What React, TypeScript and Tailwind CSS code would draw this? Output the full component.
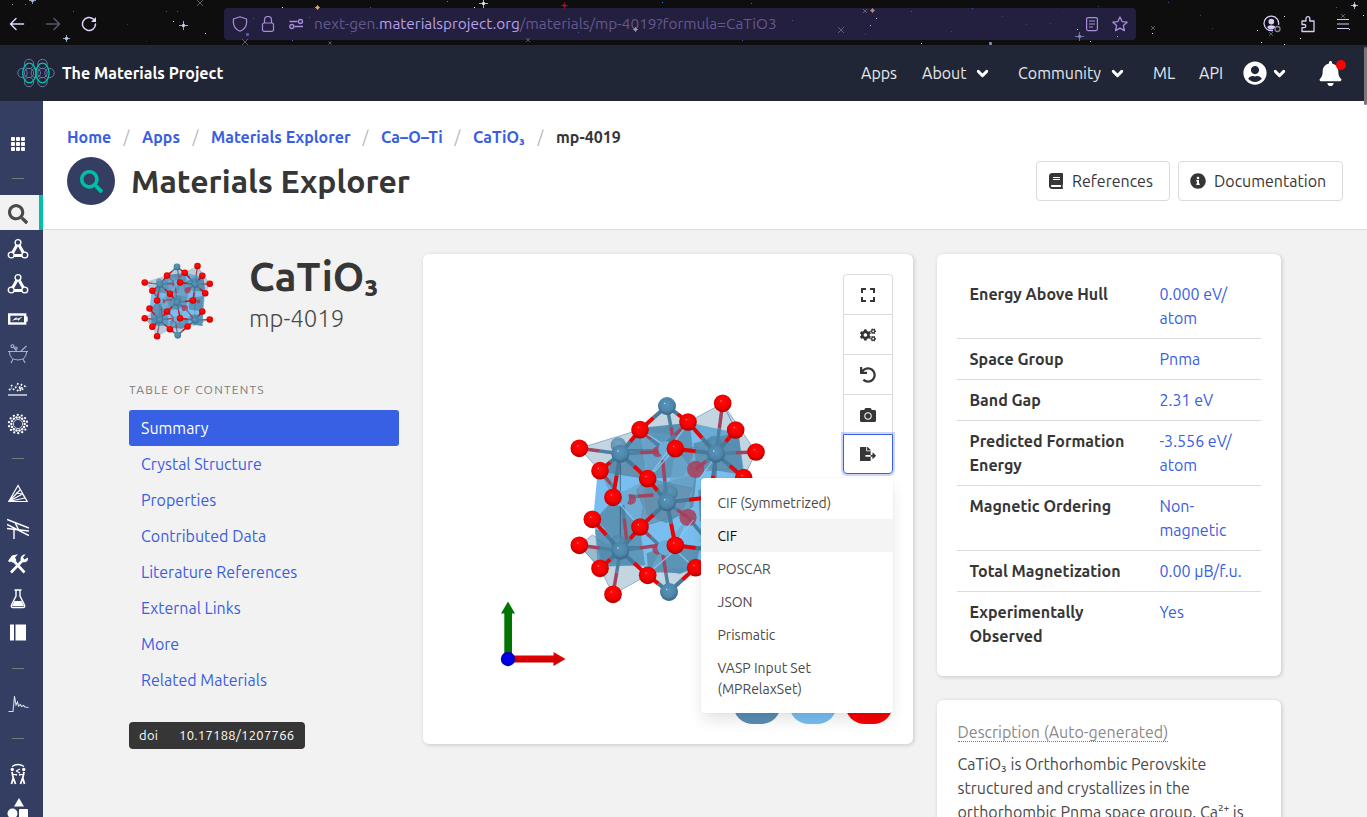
import React from "react";
import {
  FaBook,
  FaInfoCircle,
  FaCogs,
  FaUndo,
  FaCamera,
  FaFileExport,
  FaSearch,
  FaBell,
  FaUserCircle,
} from "react-icons/fa";
import { MdFullscreen } from "react-icons/md";
import { LuChevronDown } from "react-icons/lu";

type P = [number, number];

/* ---------- crystal structure ---------- */

const calcium: P[] = [
  [561, 78],
  [421, 221],
  [708, 221],
  [561, 367],
  [421, 512],
  [708, 512],
  [567, 636],
];

const oxygen: P[] = [
  [728, 70], [624, 126], [480, 149], [298, 205], [767, 150], [828, 216],
  [586, 206], [360, 272], [503, 296], [791, 293], [399, 352], [692, 352],
  [337, 418], [480, 441], [767, 441], [298, 496], [586, 496], [828, 506],
  [360, 565], [503, 586], [647, 563], [399, 643],
];

const backOxygen: P[] = [[647, 268], [624, 412], [533, 215], [452, 358], [533, 508], [735, 360]];

const bonds: [P, P][] = [
  [[561, 78], [480, 149]], [[561, 78], [624, 126]],
  [[421, 221], [480, 149]], [[421, 221], [360, 272]], [[421, 221], [399, 352]], [[421, 221], [503, 296]],
  [[708, 221], [624, 126]], [[708, 221], [767, 150]], [[708, 221], [586, 206]], [[708, 221], [791, 293]], [[708, 221], [692, 352]],
  [[561, 367], [503, 296]], [[561, 367], [480, 441]], [[561, 367], [586, 496]], [[561, 367], [692, 352]],
  [[421, 512], [337, 418]], [[421, 512], [480, 441]], [[421, 512], [360, 565]], [[421, 512], [503, 586]],
  [[708, 512], [767, 441]], [[708, 512], [647, 563]], [[708, 512], [586, 496]],
  [[567, 636], [503, 586]], [[567, 636], [647, 563]],
];

const backBonds: [P, P][] = [
  [[421, 221], [298, 205]], [[708, 221], [828, 216]], [[708, 221], [728, 70]],
  [[421, 512], [298, 496]], [[421, 512], [399, 643]], [[708, 512], [828, 506]],
  [[561, 78], [585, 206]], [[567, 636], [548, 520]], [[561, 367], [624, 412]],
  [[545, 205], [480, 149]], [[545, 205], [624, 126]], [[425, 352], [360, 272]],
  [[425, 352], [520, 345]], [[545, 503], [480, 441]], [[708, 221], [647, 268]],
  [[561, 367], [548, 240]], [[425, 352], [440, 480]], [[421, 221], [537, 215]],
  [[421, 512], [537, 496]], [[624, 412], [708, 512]],
];

function Bond({ a, b, faded }: { a: P; b: P; faded?: boolean }) {
  const mx = (a[0] + b[0]) / 2;
  const my = (a[1] + b[1]) / 2;
  return (
    <g strokeWidth={faded ? 10.5 : 12}>
      <line x1={a[0]} y1={a[1]} x2={mx} y2={my} stroke={faded ? "#4c81a3" : "#47799a"} />
      <line x1={mx} y1={my} x2={b[0]} y2={b[1]} stroke={faded ? "#a04560" : "#e30508"} />
    </g>
  );
}

function Crystal({ id, className }: { id: string; className: string }) {
  const red = `url(#${id}-o)`;
  const blue = `url(#${id}-ca)`;
  return (
    <svg className={className} viewBox="261 30 600 660">
      <defs>
        <radialGradient id={`${id}-o`} cx="0.48" cy="0.4" r="0.62">
          <stop offset="0" stopColor="#ff0b0b" />
          <stop offset="0.6" stopColor="#f40000" />
          <stop offset="1" stopColor="#a80000" />
        </radialGradient>
        <radialGradient id={`${id}-ca`} cx="0.48" cy="0.4" r="0.62">
          <stop offset="0" stopColor="#5893b9" />
          <stop offset="0.6" stopColor="#4d86aa" />
          <stop offset="1" stopColor="#35607d" />
        </radialGradient>
      </defs>
      <path d="M352 285 L421 221 L485 150 L630 128 L775 160 L790 260 L768 560 L700 545 L600 582 L500 562 L352 545 L341 400Z" fill="#78bfef" />
      <g fill="#5c94b7">
        <path d="M485 143 L630 128 L640 225 L610 290 L503 296Z" opacity="0.95" />
        <path d="M421 221 L485 150 L500 296 L430 285 L375 275Z" opacity="0.9" />
        <path d="M640 190 L775 155 L790 285 L650 262Z" />
        <path d="M400 360 L440 400 L480 441 L421 490 L345 418Z" />
        <path d="M485 330 L650 280 L640 380 L560 430 L500 405Z" />
        <path d="M655 330 L780 315 L770 440 L660 425Z" />
        <path d="M345 450 L480 441 L495 555 L365 560Z" opacity="0.9" />
        <path d="M500 520 L590 490 L660 500 L647 563 L600 580 L505 575Z" />
        <path d="M660 480 L770 460 L768 560 L690 550Z" />
      </g>
      <g fill="#6ca7cd" opacity="0.75">
        <path d="M545 205 L480 149 L503 296 L586 206Z" />
        <path d="M399 352 L503 296 L480 441 L440 400Z" />
        <path d="M586 206 L647 270 L624 415 L561 367Z" />
        <path d="M545 503 L624 415 L586 496 L503 586Z" />
      </g>
      <g fill="#668fab" fillOpacity="0.7" stroke="#4f89ae" strokeWidth="2">
        <path d="M470 330 L503 296 L635 325 L600 405 L480 441 L490 380Z" />
        <path d="M421 221 L503 296 L400 280 L360 272Z" />
        <path d="M708 221 L647 200 L600 215 L640 275 L770 265Z" fillOpacity="0.4" />
      </g>
      <g fill="#4f85a6" fillOpacity="0.34" stroke="#6497b8" strokeWidth="2">
        <path d="M298 205 L480 149 L421 221Z" />
        <path d="M298 205 L421 221 L399 352 L360 272Z" />
        <path d="M480 149 L561 78 L624 126 L585 170Z" />
        <path d="M624 126 L728 70 L767 150 L708 221Z" />
        <path d="M728 70 L828 216 L708 221 L767 150Z" />
        <path d="M708 221 L828 216 L791 293Z" />
        <path d="M298 496 L337 465 L421 512 L360 565Z" />
        <path d="M298 496 L421 512 L503 586 L399 643 L360 565Z" />
        <path d="M503 586 L567 636 L647 563 L590 560Z" />
        <path d="M708 512 L828 506 L690 560Z" />
      </g>
      <g stroke="#1e3850" strokeWidth="2.2" opacity="0.8">
        <path d="M421 210 L586 210 M421 210 L421 501 M421 501 L708 501 M708 221 L708 501" fill="none" />
      </g>
      <g fill={blue} opacity="0.75">
        <circle cx="415" cy="195" r="23" />
        <circle cx="702" cy="190" r="23" />
        <circle cx="570" cy="338" r="23" />
        <circle cx="414" cy="487" r="23" />
        <circle cx="702" cy="487" r="23" />
      </g>
      {backBonds.map(([a, b], i) => (
        <Bond key={i} a={a} b={b} faded />
      ))}
      <g fill="#a8405a" opacity="0.85">
        {backOxygen.map(([x, y], i) => (
          <circle key={i} cx={x} cy={y} r={i < 2 ? 26 : 16} />
        ))}
      </g>
      <g fill="#69aedb">
        <circle cx="558" cy="207" r="23" />
        <circle cx="425" cy="355" r="22" />
        <circle cx="555" cy="503" r="23" />
      </g>
      <g stroke="#8ccbf3" strokeWidth="3.5" opacity="0.9" fill="none">
        <path d="M480 149 L545 190 M624 130 L510 285 M413 365 L470 430 M586 206 L510 290 M586 510 L510 576 M586 510 L640 560 M655 300 L700 240 M640 420 L590 485" />
      </g>
      {bonds.map(([a, b], i) => (
        <Bond key={i} a={a} b={b} />
      ))}
      {calcium.map(([x, y], i) => (
        <g key={i}>
          <circle cx={x} cy={y} r="27" fill={blue} />
          <circle cx={x - 7} cy={y - 8} r="2" fill="#e5f3fb" />
        </g>
      ))}
      {oxygen.map(([x, y], i) => (
        <g key={i}>
          <circle cx={x} cy={y} r="26.5" fill={red} />
          <circle cx={x - 5} cy={y - 7} r="2" fill="#ff9a9a" />
        </g>
      ))}
    </svg>
  );
}

function Axes() {
  return (
    <svg className="h-[68px] w-[70px]" viewBox="0 0 70 68">
      <defs>
        <linearGradient id="ax-r" x1="0" y1="0" x2="0" y2="1">
          <stop offset="0" stopColor="#f80000" />
          <stop offset="1" stopColor="#b80000" />
        </linearGradient>
        <radialGradient id="ax-b">
          <stop offset="0.3" stopColor="#0000f5" />
          <stop offset="1" stopColor="#0000b0" />
        </radialGradient>
      </defs>
      <path d="M4.300 58 V13.500 H1 L8 1.500 L15 13.500 H12 V58Z" fill="#007600" />
      <path d="M8 55.500 H53.500 V52 L65.500 59 L53.500 66 V62.500 H8Z" fill="url(#ax-r)" />
      <circle cx="8" cy="59" r="7.200" fill="url(#ax-b)" />
    </svg>
  );
}

/* ---------- browser toolbar ---------- */

const dots: [number, number, string][] = [
  [12, 4, "#9ab"], [25, 4, "#b050a0"], [73, 11, "#667"], [127, 24, "#335"], [166, 11, "#557"], [177, 11, "#557"],
  [173, 21, "#fff"], [205, 33, "#fff"], [146, 41, "#225"], [282, 7, "#fff"], [292, 40, "#3a6ad0"], [253, 18, "#556"],
  [309, 17, "#556"], [351, 33, "#447"], [370, 7, "#35a"], [447, 1, "#777"], [474, 7, "#fff"], [662, 2, "#3a7aff"],
  [751, 3, "#667"], [792, 20, "#35a"], [742, 40, "#45a"], [578, 32, "#35a"], [865, 34, "#638"], [876, 18, "#bcf"],
  [870, 25, "#aaf"], [911, 11, "#558"], [921, 43, "#fff"], [951, 31, "#446"], [972, 8, "#35a"], [1002, 16, "#446"],
  [1026, 24, "#446"], [1050, 23, "#446"], [1063, 12, "#426"], [1098, 6, "#448"], [1090, 41, "#ccc"], [1077, 29, "#eee"],
  [1117, 36, "#aab"], [1168, 2, "#358"], [1200, 15, "#346"], [1212, 28, "#346"], [1152, 33, "#eee"], [1257, 30, "#fff"],
  [1284, 16, "#fff"], [1284, 44, "#fff"], [1261, 42, "#fff"], [1300, 38, "#fff"], [1336, 7, "#556"], [1349, 29, "#eee"],
  [1363, 15, "#eee"],
];

const sparkles: [number, number, number, string][] = [
  [32, 0, 3, "#b5c6e8"], [183, 25, 4, "#cfe0ff"], [66, 38, 3, "#c4d5f0"], [317, 7, 2, "#e6b278"], [483, 3, 4, "#e4edff"],
  [564, 5, 3, "#a8142c"], [635, 29, 2, "#aa9aa8"], [872, 10, 2, "#b7908c"], [1079, 36, 4, "#7f8fc8"], [990, 43, 1, "#89b"],
  [1354, 5, 3, "#d5e3ff"], [247, 34, 1, "#56a"],
];

const crosses: [number, number, number][] = [
  [200, 3, 3], [245, 42, 3], [330, 43, 1.5], [528, 40, 2], [865, 11, 2], [841, 30, 3], [1153, 28, 2], [1271, 34, 2], [1343, 16, 2],
];

function Stars() {
  return (
    <svg className="pointer-events-none absolute left-0 top-0 h-[45px] w-[1367px]" viewBox="0 0 1367 45">
      {dots.map(([x, y, c], i) => (
        <rect key={i} x={x} y={y} width="1" height="1" fill={c} />
      ))}
      {sparkles.map(([x, y, r, c], i) => (
        <g key={i} fill={c}>
          <rect x={x} y={y - r} width="1" height={2 * r + 1} opacity="0.75" />
          <rect x={x - r} y={y} width={2 * r + 1} height="1" opacity="0.75" />
          <rect x={x - 1} y={y - 1} width="3" height="3" opacity="0.7" />
        </g>
      ))}
      {crosses.map(([x, y, r], i) => (
        <path key={i} d={`M${x - r} ${y - r} l${2 * r} ${2 * r} m0 ${-2 * r} l${-2 * r} ${2 * r}`} stroke="#6a7288" strokeWidth="0.8" />
      ))}
    </svg>
  );
}

function BrowserBar() {
  return (
    <div className="relative flex h-[45px] shrink-0 items-start bg-[#0e0e0e]">
      <div className="flex h-[48px] w-[224px] items-center pl-[9px] text-[#e0d5fb]">
        <svg className="size-4" viewBox="0 0 16 16" fill="none" stroke="currentColor" strokeWidth="1.5" strokeLinecap="round" strokeLinejoin="round">
          <path d="M14.500 8H1.500M7 2.500 1.500 8 7 13.500" />
        </svg>
        <svg className="ml-5 size-4 text-[#5b5766]" viewBox="0 0 16 16" fill="none" stroke="currentColor" strokeWidth="1.5" strokeLinecap="round" strokeLinejoin="round">
          <path d="M1.500 8h13M9 2.500 14.500 8 9 13.500" />
        </svg>
        <svg className="ml-5 size-4" viewBox="0 0 16 16" fill="none" stroke="currentColor" strokeWidth="1.5" strokeLinecap="round">
          <path d="M14.500 8A6.500 6.500 0 1 1 12.500 3.300" />
          <path d="M15 1v5h-5z" fill="currentColor" stroke="none" />
        </svg>
      </div>
      <div className="mt-2 flex h-8 w-[912px] items-center rounded-[4px] bg-[#231f3e] text-[#a78fdc]">
        <svg className="ml-2 size-4" viewBox="0 0 16 16" fill="none" stroke="currentColor" strokeWidth="1.2" strokeLinejoin="round">
          <path d="M8 .8 14.600 3v3.500c0 4-2.600 7-6.600 8.700C4 13.500 1.400 10.500 1.400 6.500V3z" />
        </svg>
        <svg className="ml-3 size-4" viewBox="0 0 16 16" fill="none" stroke="currentColor" strokeWidth="1.2">
          <rect x="2.5" y="7" width="11" height="8.3" rx="1.5" />
          <path d="M4.500 7V4a3.500 3.500 0 0 1 7 0v3" />
        </svg>
        <svg className="ml-3 size-4" viewBox="0 0 16 16" fill="none" stroke="currentColor" strokeWidth="1.3">
          <path d="M1.500 5.500h8M6.500 10.500H15" />
          <circle cx="12.5" cy="5.5" r="2" />
          <circle cx="3.8" cy="10.5" r="2" />
        </svg>
        <div className="ml-[10px] w-[778px] whitespace-nowrap text-[15.4px] leading-8 text-[#66578f]">
          <span>next-gen.</span>
          <span className="text-[#b9a0ee]">materialsproject.org</span>
          <span>/materials/mp-4019?formula=CaTiO3</span>
        </div>
        <svg className="-ml-[8px] size-4" viewBox="0 0 16 16" fill="none" stroke="currentColor" strokeWidth="1.2">
          <rect x="2.6" y="1.6" width="10.8" height="13" rx="1.5" />
          <path d="M5 5h6M5 8h6M5 11h4" />
        </svg>
        <svg className="ml-3 size-4" viewBox="0 0 16 16" fill="none" stroke="currentColor" strokeWidth="1.3" strokeLinejoin="round">
          <path d="m8 1 2.100 4.600 5 .6-3.700 3.400 1 5L8 12.100l-4.400 2.500 1-5L.9 6.200l5-.6z" />
        </svg>
      </div>
      <div className="flex h-[48px] items-center pl-[127px] text-[#d9ccf7]">
        <svg className="size-[18px]" viewBox="0 0 18 18" fill="none" stroke="currentColor" strokeWidth="1.3">
          <path d="M15.500 9.800A7.300 7.300 0 1 0 10 15.500" />
          <circle cx="8.3" cy="6.6" r="2.2" fill="currentColor" />
          <path d="M4.300 12.400c0-3 8-3 8 0L9.500 14.500H6.500z" fill="currentColor" stroke="none" />
          <circle cx="14.5" cy="14" r="2.5" stroke="#8d869c" />
        </svg>
        <svg className="ml-[18px] size-[18px]" viewBox="0 0 18 18" fill="none" stroke="currentColor" strokeWidth="1.3" strokeLinejoin="round">
          <path d="M3 8V6h4V3.500a1.900 1.900 0 0 1 3.800 0V6H15v10.500H3v-3.800h2.200a1.600 1.600 0 0 0 0-3.200H3z" />
        </svg>
        <svg className="ml-[18px] size-4" viewBox="0 0 16 16" stroke="currentColor" strokeWidth="1.2">
          <path d="M2 3.500h12M2 8h12M2 12.500h12" />
        </svg>
      </div>
      <Stars />
    </div>
  );
}

/* ---------- site header ---------- */

function Logo() {
  return (
    <svg className="h-[30px] w-[38px]" viewBox="0 0 38 30" fill="none">
      <g stroke="#6a76ae" strokeWidth="1">
        <circle cx="5.5" cy="15" r="4.7" />
        <circle cx="12" cy="6" r="4.7" />
        <circle cx="25.5" cy="6" r="4.7" />
        <circle cx="12" cy="24" r="4.7" />
        <circle cx="25.500" cy="24" r="4.7" />
        <circle cx="32.5" cy="15" r="4.7" />
        <circle cx="12" cy="15" r="4.7" />
        <circle cx="25.500" cy="15" r="4.7" />
        <circle cx="18.8" cy="15" r="4.7" />
      </g>
      <g stroke="#00c4ae" strokeWidth="1.3">
        <ellipse cx="12.300" cy="15" rx="6.6" ry="9.8" />
        <ellipse cx="25.500" cy="15" rx="6.6" ry="9.8" />
      </g>
    </svg>
  );
}

const Chevron = () => <LuChevronDown className="size-[17px]" strokeWidth={4} />;

function SiteHeader() {
  return (
    <header className="flex h-14 shrink-0 items-center bg-[#202636] text-base text-white">
      <div className="flex w-[861px] items-center gap-[7px] pl-[17px]">
        <Logo />
        <span className="whitespace-nowrap font-semibold">The Materials Project</span>
      </div>
      <nav className="flex items-center whitespace-nowrap text-[#e6e8ee]">
        <span className="w-[61px]">Apps</span>
        <span className="w-[52px]">About</span>
        <span className="w-11 text-white"><Chevron /></span>
        <span className="w-[91px]">Community</span>
        <span className="w-[44px] text-white"><Chevron /></span>
        <span className="w-[46px]">ML</span>
        <span className="w-11">API</span>
        <FaUserCircle className="size-6 text-white" />
        <span className="ml-[4px] w-[47px] text-white"><Chevron /></span>
        <span className="relative text-white">
          <FaBell className="size-[25px]" />
          <span className="absolute -right-[3px] -top-[1px] size-[10px] rounded-full bg-[#ff0000]" />
        </span>
      </nav>
    </header>
  );
}

/* ---------- side rail ---------- */

const Svg = ({ children }: { children: React.ReactNode }) => (
  <svg className="size-[22px]" viewBox="0 0 22 22" fill="none" stroke="#fff" strokeWidth="1.4">
    {children}
  </svg>
);

const Molecule = () => (
  <Svg>
    <path d="M10 7 5.500 15M12 7l4.500 8M7 17.500h8" strokeWidth="3" />
    <circle cx="11" cy="4.5" r="2.9" />
    <circle cx="4.2" cy="17" r="2.9" />
    <circle cx="17.8" cy="17" r="2.9" />
  </Svg>
);

const Divider = () => <span className="-mt-px h-px w-3 bg-[#77797c]" />;

const ringAngles = Array.from({ length: 14 }, (_, i) => (i * Math.PI * 2) / 14);

const railItems: React.ReactNode[] = [
  <Svg>
    <g fill="#fff" stroke="none">
      {[4, 9, 14].map((y) =>
        [4, 9, 14].map((x) => <rect key={`${x}-${y}`} x={x} y={y} width="4" height="4" rx="1" />),
      )}
    </g>
  </Svg>,
  <Divider />,
  null,
  <Molecule />,
  <Molecule />,
  <Svg>
    <rect x="2.2" y="6.5" width="16" height="9" strokeWidth="2.4" />
    <path d="M19.700 8.500v5" strokeWidth="2" />
    <path d="m5 12.700 4.500-3.800v1.500l2.500-.2 3.500-1.700-4.500 4.500v-1.500l-2.500.3z" fill="#fff" stroke="none" />
  </Svg>,
  <Svg>
    <g stroke="#a9b4cb" strokeWidth="1.1">
      <path d="M1 8.500h20M2.500 9c0 4.500 3 8 8.500 8s8.500-3.500 8.500-8M6 16l-2 4M16 16l2 4M14 8l5.500-5M6 3.500 9.500 8" />
      <circle cx="5.5" cy="3.2" r="1.5" />
      <circle cx="9" cy="5.2" r="1.2" />
    </g>
  </Svg>,
  <Svg>
    <path d="M1 17h19" strokeWidth="1.2" />
    <path d="m2 12 3-2M4 7l2 2M6 12l4-4M11 5l-1 3M10 13l4-3 3 2M15 6l-3 4M17 8l3 1M13 13l2-4" strokeWidth="1.6" strokeDasharray="1.8 1.2" />
  </Svg>,
  <Svg>
    <circle cx="11" cy="11" r="4.6" strokeWidth="1" stroke="#c7d4dd" />
    <g fill="#fff" stroke="none">
      {ringAngles.map((a) => (
        <React.Fragment key={a}>
          <circle cx={11 + 6.7 * Math.cos(a)} cy={11 + 6.7 * Math.sin(a)} r="1.2" />
          <circle cx={11 + 9.2 * Math.cos(a + 0.2)} cy={11 + 9.2 * Math.sin(a + 0.2)} r="1.15" />
        </React.Fragment>
      ))}
    </g>
  </Svg>,
  <Divider />,
  <Svg>
    <path d="M11 2.500 1.800 18.500h18.400zM1.800 18.500 13 7M1.800 18.500 15.500 11l2.500 4M1.800 18.500 18 15M9 10l6.500 1" strokeWidth="1.2" />
  </Svg>,
  <Svg>
    <path d="m0 1.500 22 8.500M0 6.500l22 11M0 10.500 22 13M7 12v9M8 4.500l4 8" strokeWidth="1.4" />
  </Svg>,
  <Svg>
    <path d="M6 7 17.500 19.500" strokeWidth="2.6" />
    <path d="m1 8 4-5.500 6-1.300L8 4.500l1.500 2.700-4 2.600-1.600-1.600L3 9.500z" fill="#fff" stroke="none" />
    <path d="M4 19.500 15.500 7.500" strokeWidth="2.6" />
    <path d="M18.500 1.500 16 4.500l1.500 2L21 4.500c.5 4-2.500 5.500-5.500 4.500l-2-2.500c0-3 2-5.500 5-5z" fill="#fff" stroke="none" />
  </Svg>,
  <Svg>
    <path d="M7.500 2h7M9 2v6L4.500 17q-.8 2.500 1.500 2.500h10q2.300 0 1.500-2.500L13 8V2" />
    <path d="M7.500 13h7l2.500 5H5z" fill="#fff" stroke="none" />
  </Svg>,
  <Svg>
    <path d="M3 1.500h4v16H3zM8.500 1.500H19v16H8.500z" fill="#fff" stroke="none" />
  </Svg>,
  <Divider />,
  <Svg>
    <path d="M1.500 18.500h4.500L7.500 3l1.500 9 1.500-3 1 4 2-1.500 1 2 2-1 1.500 1.500 3.500.5" stroke="#cfe1e8" strokeWidth="1.1" />
  </Svg>,
  <Divider />,
  <Svg>
    <path d="M5 3.500q6-4 12 0" strokeWidth="1.3" />
    <circle cx="5.3" cy="6.5" r="1.7" fill="#fff" stroke="none" />
    <circle cx="16.7" cy="6.5" r="1.7" fill="#fff" stroke="none" />
    <path d="m5 9 1.200 6L4.500 21M6 14l2.500 7M17 9l-1.200 6 1.700 6M16 14l-2.500 7M5 10.500l5 1.500M17 10.500 12 12" strokeWidth="1.8" />
    <path d="m9 8 4-2M9 8l4 2" strokeWidth="1.1" />
  </Svg>,
  <Svg>
    <g fill="#fff" stroke="none">
      <path d="M12 0l5 8.500H7z" />
      <circle cx="5.5" cy="15.5" r="5" />
      <rect x="12" y="11" width="9" height="9" rx="1" />
    </g>
  </Svg>,
];

function SideRail() {
  return (
    <aside className="flex w-[43px] shrink-0 flex-col bg-[#343e63] pt-6">
      {railItems.map((icon, i) =>
        i === 2 ? (
          <div key={i} className="flex h-[35px] shrink-0 items-center border-r-4 border-[#00bfa9] bg-[#f2f2f2] pl-2 pt-[2px]">
            <FaSearch className="size-5 text-[#4a4a4a]" />
          </div>
        ) : (
          <div key={i} className="flex h-[35px] w-9 shrink-0 items-center justify-center pt-[3px]">
            {icon}
          </div>
        ),
      )}
    </aside>
  );
}

/* ---------- page heading ---------- */

const crumbs: [string, string][] = [
  ["Home", "w-11"],
  ["Apps", "w-[38px]"],
  ["Materials Explorer", "w-[139px]"],
  ["Ca–O–Ti", "w-[61px]"],
  ["CaTiO₃", "w-[52px]"],
];

function PageHeading() {
  return (
    <div className="h-[129px] shrink-0 border-b border-[#dbdbdb] bg-white px-6 pt-6">
      <div className="flex h-6 items-center whitespace-nowrap text-base font-semibold text-[#3a5ee2]">
        {crumbs.map(([label, w]) => (
          <React.Fragment key={label}>
            <span className={w}>{label}</span>
            <span className="w-[31px] text-center font-normal text-[#b5b5b5]">/</span>
          </React.Fragment>
        ))}
        <span className="text-[#363636]">mp-4019</span>
      </div>
      <div className="mt-2 flex h-12 items-center">
        <span className="flex size-12 items-center justify-center rounded-full bg-[#343e63]">
          <FaSearch className="size-[23px] text-[#00bfa9]" />
        </span>
        <h1 className="ml-4 flex-1 whitespace-nowrap text-[32px] font-semibold leading-[48px] text-[#363636]">Materials Explorer</h1>
        <button className="mr-2 flex h-10 w-[134px] items-center gap-2 whitespace-nowrap rounded border border-[#dbdbdb] pl-[11px] text-base text-[#363636]">
          <FaBook className="size-4" />
          References
        </button>
        <button className="flex h-10 w-[165px] items-center gap-2 whitespace-nowrap rounded border border-[#dbdbdb] pl-[11px] text-base text-[#363636]">
          <FaInfoCircle className="size-4" />
          Documentation
        </button>
      </div>
    </div>
  );
}

/* ---------- columns ---------- */

const toc = ["Crystal Structure", "Properties", "Contributed Data", "Literature References", "External Links", "More", "Related Materials"];

function LeftColumn() {
  return (
    <div className="w-[270px] shrink-0">
      <div className="flex h-[98px]">
        <div className="w-[120px] pl-[11px] pt-[7px]">
          <Crystal id="thumb" className="h-[81px] w-[74px]" />
        </div>
        <div className="whitespace-nowrap">
          <h2 className="-mt-px h-12 text-[40px] font-semibold leading-[48px] text-[#363636]">CaTiO₃</h2>
          <p className="mt-px text-[24px] font-light leading-[34px] text-[#4a4a4a]">mp-4019</p>
        </div>
      </div>
      <p className="mt-[29px] whitespace-nowrap text-xs leading-[18px] tracking-[1.2px] text-[#7a7a7a]">TABLE OF CONTENTS</p>
      <ul className="mt-[11px] text-base text-[#3a5ee2]">
        <li className="h-9 rounded-[3px] bg-[#3860e4] px-3 leading-9 text-white">Summary</li>
        {toc.map((t) => (
          <li key={t} className="h-9 px-3 leading-9">
            {t}
          </li>
        ))}
      </ul>
      <div className="mt-6 flex h-[27px] w-44 items-center whitespace-nowrap rounded bg-[#363636] pl-[10px] pt-px text-[13px] text-white">
        <span className="w-10 tracking-[0.3px]">doi</span>
        <span className="tracking-[0.3px]">10.17188/1207766</span>
      </div>
    </div>
  );
}

const menu = ["CIF (Symmetrized)", "CIF", "POSCAR", "JSON", "Prismatic"];

function Viewer() {
  return (
    <div className="relative h-[490px] w-[490px] shrink-0 rounded-md bg-white shadow-[1px_1px_4px_rgba(10,10,10,0.18)]">
      <Crystal id="main" className="absolute left-[144px] top-[136px] h-[220px] w-[200px]" />
      <div className="absolute left-[77px] top-[346px]">
        <Axes />
      </div>
      <div className="absolute left-[420px] top-5 flex w-[50px] flex-col rounded text-[#363636]">
        <span className="flex h-[41px] items-center justify-center rounded-t border border-[#dbdbdb]">
          <MdFullscreen className="size-6" />
        </span>
        <span className="flex h-10 items-center justify-center border border-t-0 border-[#dbdbdb]">
          <FaCogs className="size-4" />
        </span>
        <span className="flex h-10 items-center justify-center border border-t-0 border-[#dbdbdb]">
          <FaUndo className="size-4" />
        </span>
        <span className="flex h-[39px] items-center justify-center border-x border-[#dbdbdb]">
          <FaCamera className="size-4" />
        </span>
        <span className="flex h-10 items-center justify-center rounded-b border border-[#3860e4] shadow-[0_0_0_2px_rgba(56,96,228,0.25)]">
          <FaFileExport className="size-4" />
        </span>
      </div>
      <div className="absolute left-[310px] top-[430px] flex gap-2">
        <span className="h-10 w-12 rounded-full bg-[#5a8fb5]" />
        <span className="h-10 w-12 rounded-full bg-[#78c0f3]" />
        <span className="h-10 w-12 rounded-full bg-[#fa0000]" />
      </div>
      <ul className="absolute left-[278px] top-[224px] h-[235px] w-48 rounded bg-white py-2 text-sm leading-[21px] text-[#4a4a4a] shadow-[0_8px_16px_-2px_rgba(10,10,10,0.12),0_0_0_1px_rgba(10,10,10,0.02)]">
        {menu.map((m) =>
          m === "CIF" ? (
            <li key={m} className="bg-[#f4f4f4] pb-[5px] pl-[16.5px] pt-[7px] text-[#0a0a0a]">
              {m}
            </li>
          ) : (
            <li key={m} className="pb-[5px] pl-[16.5px] pt-[7px]">
              {m}
            </li>
          ),
        )}
        <li className="pb-[5px] pl-[16.5px] pt-[7px]">
          VASP Input Set
          <br />
          (MPRelaxSet)
        </li>
      </ul>
    </div>
  );
}

const rows: [string[], string[]][] = [
  [["Energy Above Hull"], ["0.000 eV/", "atom"]],
  [["Space Group"], ["Pnma"]],
  [["Band Gap"], ["2.31 eV"]],
  [["Predicted Formation", "Energy"], ["-3.556 eV/", "atom"]],
  [["Magnetic Ordering"], ["Non-", "magnetic"]],
  [["Total Magnetization"], ["0.00 µB/f.u."]],
  [["Experimentally", "Observed"], ["Yes"]],
];

const Lines = ({ text }: { text: string[] }) => (
  <>
    {text.map((t) => (
      <span key={t} className="block whitespace-nowrap">
        {t}
      </span>
    ))}
  </>
);

function RightColumn() {
  return (
    <div className="flex w-[344px] shrink-0 flex-col gap-6">
      <div className="h-[422px] shrink-0 rounded-md bg-white p-5 shadow-[1px_1px_4px_rgba(10,10,10,0.18)]">
        {rows.map(([k, v]) => (
          <div key={k[0]} className="flex border-b border-[#dbdbdb] py-2 text-base leading-6 last:border-b-0">
            <div className="w-[202.5px] pl-[12.5px] font-semibold text-[#363636]">
              <Lines text={k} />
            </div>
            <div className="text-[#3a5ee2]">
              <Lines text={v} />
            </div>
          </div>
        ))}
      </div>
      <div className="h-[200px] shrink-0 whitespace-nowrap rounded-md bg-white py-5 pl-[20.5px] text-base leading-6 text-[#4a4a4a] shadow-[1px_1px_4px_rgba(10,10,10,0.18)]">
        <p className="mb-2 h-6">
          <span className="inline-block h-[22px] border-b border-dotted border-[#7a7a7a] text-[#8a8a8a]">Description (Auto-generated)</span>
        </p>
        <p>CaTiO₃ is Orthorhombic Perovskite</p>
        <p>structured and crystallizes in the</p>
        <p>orthorhombic Pnma space group. Ca²⁺ is</p>
      </div>
    </div>
  );
}

export default function App() {
  return (
    <div className="relative flex h-[817px] w-[1367px] flex-col overflow-hidden bg-[#f2f2f2] font-[Ubuntu,'Noto_Sans',sans-serif]">
      <BrowserBar />
      <SiteHeader />
      <div className="flex min-h-0 flex-1 overflow-hidden">
        <SideRail />
        <main className="flex min-w-0 flex-1 flex-col overflow-hidden">
          <PageHeading />
          <div className="flex min-h-0 flex-1 gap-6 overflow-hidden pl-[86px] pt-6">
            <LeftColumn />
            <Viewer />
            <RightColumn />
          </div>
        </main>
      </div>
      <span className="absolute right-0 top-[47px] h-[58px] w-[3px] rounded bg-[#777]" />
    </div>
  );
}
